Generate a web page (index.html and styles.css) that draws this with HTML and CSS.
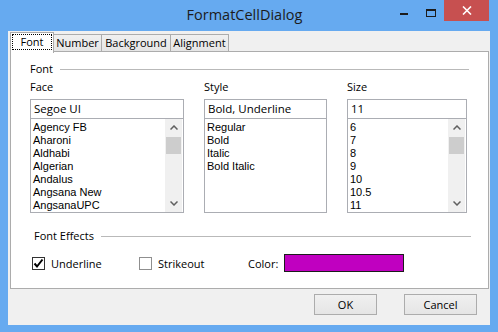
FILE: index.html
```html
<!DOCTYPE html>
<html lang="en">
<head>
    <meta charset="UTF-8">
    <title>FormatCellDialog</title>
    <link rel="stylesheet" href="styles.css">
</head>
<body>
    <div class="window">
        <div class="titlebar">
            <div class="title">FormatCellDialog</div>
            <div class="caption">
                <div class="cap-btn cap-min"><span class="min-glyph"></span></div>
                <div class="cap-btn cap-max"><span class="max-glyph"></span></div>
                <div class="cap-btn cap-close">
                    <svg width="10" height="9" viewBox="0 0 10 9">
                        <path d="M1 0.5 L9 8.5 M9 0.5 L1 8.5" stroke="#fff" stroke-width="1.6" fill="none"/>
                    </svg>
                </div>
            </div>
        </div>

        <div class="client">
            <div class="tabs">
                <div class="tab active tab-font"><span class="focus">Font</span></div>
                <div class="tab tab-number">Number</div>
                <div class="tab tab-background">Background</div>
                <div class="tab tab-alignment">Alignment</div>
            </div>

            <div class="page">
                <div class="group-head">
                    <span>Font</span>
                    <span class="rule"></span>
                </div>

                <div class="font-grid">
                    <div class="col">
                        <div class="field-label">Face</div>
                        <div class="textbox">Segoe UI</div>
                        <div class="listbox">
                            <ul class="items">
                                <li>Agency FB</li>
                                <li>Aharoni</li>
                                <li>Aldhabi</li>
                                <li>Algerian</li>
                                <li>Andalus</li>
                                <li>Angsana New</li>
                                <li>AngsanaUPC</li>
                            </ul>
                            <div class="scrollbar">
                                <div class="arrow">
                                    <svg width="8" height="5" viewBox="0 0 8 5"><polyline points="0.5,4.5 4,1 7.5,4.5" fill="none" stroke="#606060" stroke-width="1.5"/></svg>
                                </div>
                                <div class="thumb"></div>
                                <div class="track"></div>
                                <div class="arrow">
                                    <svg width="8" height="5" viewBox="0 0 8 5"><polyline points="0.5,0.5 4,4 7.5,0.5" fill="none" stroke="#606060" stroke-width="1.5"/></svg>
                                </div>
                            </div>
                        </div>
                    </div>

                    <div class="col">
                        <div class="field-label">Style</div>
                        <div class="textbox">Bold, Underline</div>
                        <div class="listbox">
                            <ul class="items">
                                <li>Regular</li>
                                <li>Bold</li>
                                <li>Italic</li>
                                <li>Bold Italic</li>
                            </ul>
                        </div>
                    </div>

                    <div class="col">
                        <div class="field-label">Size</div>
                        <div class="textbox">11</div>
                        <div class="listbox">
                            <ul class="items">
                                <li>6</li>
                                <li>7</li>
                                <li>8</li>
                                <li>9</li>
                                <li>10</li>
                                <li>10.5</li>
                                <li>11</li>
                            </ul>
                            <div class="scrollbar">
                                <div class="arrow">
                                    <svg width="8" height="5" viewBox="0 0 8 5"><polyline points="0.5,4.5 4,1 7.5,4.5" fill="none" stroke="#606060" stroke-width="1.5"/></svg>
                                </div>
                                <div class="thumb"></div>
                                <div class="track"></div>
                                <div class="arrow">
                                    <svg width="8" height="5" viewBox="0 0 8 5"><polyline points="0.5,0.5 4,4 7.5,0.5" fill="none" stroke="#606060" stroke-width="1.5"/></svg>
                                </div>
                            </div>
                        </div>
                    </div>
                </div>

                <div class="group-head effects-head">
                    <span>Font Effects</span>
                    <span class="rule"></span>
                </div>

                <div class="effects-row">
                    <div class="check check-underline">
                        <span class="box checked">
                            <svg width="11" height="11" viewBox="0 0 11 11"><polyline points="1.5,5.5 4,8.5 9.5,1.5" fill="none" stroke="#000" stroke-width="2"/></svg>
                        </span>
                        <span>Underline</span>
                    </div>
                    <div class="check check-strike">
                        <span class="box"></span>
                        <span>Strikeout</span>
                    </div>
                    <div class="color-label">Color:</div>
                    <div class="swatch"></div>
                </div>
            </div>

            <div class="button-bar">
                <button class="btn btn-ok">OK</button>
                <button class="btn btn-cancel">Cancel</button>
            </div>
        </div>
    </div>
</body>
</html>
```

FILE: styles.css
```css
* {
    box-sizing: border-box;
}

body {
    margin: 0;
    font-family: "Open Sans", "Liberation Sans", sans-serif;
    font-size: 11px;
    color: #000;
}

.window {
    width: 498px;
    height: 332px;
    background-color: #66aaf0;
    padding: 0 8px 7px;
    display: flex;
    flex-direction: column;
}

/* title bar */

.titlebar {
    height: 31px;
    margin: 0 -8px;
    padding-right: 9px;
    display: grid;
    grid-template-columns: 1fr auto 1fr;
}

.title {
    grid-column: 2;
    font-size: 14.5px;
    line-height: 30px;
    color: #1c1c1c;
}

.caption {
    grid-column: 3;
    justify-self: end;
    display: flex;
}

.cap-btn {
    width: 27px;
    height: 21px;
    display: flex;
    justify-content: center;
}

.cap-min {
    padding-top: 13px;
}

.min-glyph {
    width: 8px;
    height: 2px;
    background-color: #1c1c1c;
}

.cap-max {
    padding-top: 9px;
}

.max-glyph {
    width: 10px;
    height: 8px;
    border: 1px solid #1c1c1c;
    border-top-width: 2px;
}

.cap-close {
    width: 45px;
    background-color: #c75050;
    align-items: center;
}

/* client */

.client {
    flex: 1;
    background-color: #f0f0f0;
    display: flex;
    flex-direction: column;
}

.tabs {
    height: 20px;
    padding-left: 2px;
    display: flex;
    align-items: flex-start;
    position: relative;
    z-index: 1;
}

.tab {
    height: 17px;
    margin-top: 3px;
    margin-left: -1px;
    border: 1px solid #acacac;
    border-bottom: none;
    background: linear-gradient(#f0f0f0, #e5e5e5);
    text-align: center;
    line-height: 15px;
}

.tab.active {
    height: 21px;
    margin-top: 1px;
    margin-left: 0;
    background: #fff;
    padding: 1px;
    position: relative;
    z-index: 1;
}

.tab .focus {
    display: block;
    height: 16px;
    border: 1px dotted #000;
    line-height: 14px;
}

.tab-font { width: 44px; }
.tab-number { width: 49px; }
.tab-background { width: 70px; }
.tab-alignment { width: 59px; }

.page {
    height: 238px;
    margin: 0 1px 0 2px;
    border: 1px solid #acacac;
    background-color: #fff;
    padding: 9px 19px 0;
}

.group-head {
    height: 16px;
    display: flex;
    align-items: center;
    gap: 7px;
    line-height: 16px;
}

.group-head .rule {
    flex: 1;
    height: 1px;
    background-color: #b9b9b9;
}

.font-grid {
    margin-top: 2px;
    display: grid;
    grid-template-columns: 154px 123px 120px;
    column-gap: 20px;
}

.col {
    display: flex;
    flex-direction: column;
}

.field-label {
    height: 15px;
    line-height: 15px;
    margin-bottom: 5px;
}

.textbox {
    height: 19px;
    border: 1px solid #abadb3;
    border-bottom: none;
    padding-left: 3px;
    line-height: 17px;
    font-size: 11.5px;
}

.listbox {
    height: 95px;
    border: 1px solid #abadb3;
    display: flex;
    overflow: hidden;
}

.items {
    flex: 1;
    list-style: none;
    margin: 0;
    padding: 2px 0 0 2px;
    font-family: "Liberation Sans", Arial, sans-serif;
    font-size: 11px;
    line-height: 13px;
}

.scrollbar {
    width: 17px;
    margin-right: 1px;
    background-color: #f0f0f0;
    display: flex;
    flex-direction: column;
}

.arrow {
    height: 17px;
    display: flex;
    align-items: center;
    justify-content: center;
}

.thumb {
    height: 17px;
    margin: 1px 1px 0;
    background-color: #cdcdcd;
}

.track {
    flex: 1;
}

.effects-head {
    margin-top: 15px;
    padding-left: 4px;
    margin-right: -2px;
}

.effects-row {
    height: 18px;
    margin-top: 10px;
    padding-left: 2px;
    display: flex;
    align-items: center;
}

.check {
    display: flex;
    align-items: center;
    gap: 6px;
}

.check-underline { width: 107px; }
.check-strike { width: 109px; }

.box {
    width: 13px;
    height: 13px;
    border: 1px solid #333;
    background-color: #fff;
    display: flex;
    align-items: center;
    justify-content: center;
}

.check-strike .box {
    border-color: #8f8f8f;
}

.color-label {
    width: 36px;
}

.swatch {
    width: 120px;
    height: 18px;
    border: 1px solid #1c1c1c;
    background-color: #c000c0;
}

/* buttons */

.button-bar {
    flex: 1;
    padding: 5px 13px 0 0;
    display: flex;
    justify-content: flex-end;
    align-items: flex-start;
    gap: 27px;
}

.btn {
    height: 21px;
    border: 1px solid #acacac;
    background: linear-gradient(#f0f0f0, #e5e5e5);
    font-family: "Open Sans", "Liberation Sans", sans-serif;
    font-size: 11px;
    color: #000;
    padding: 0;
}

.btn-ok { width: 63px; }
.btn-cancel { width: 73px; }
```
